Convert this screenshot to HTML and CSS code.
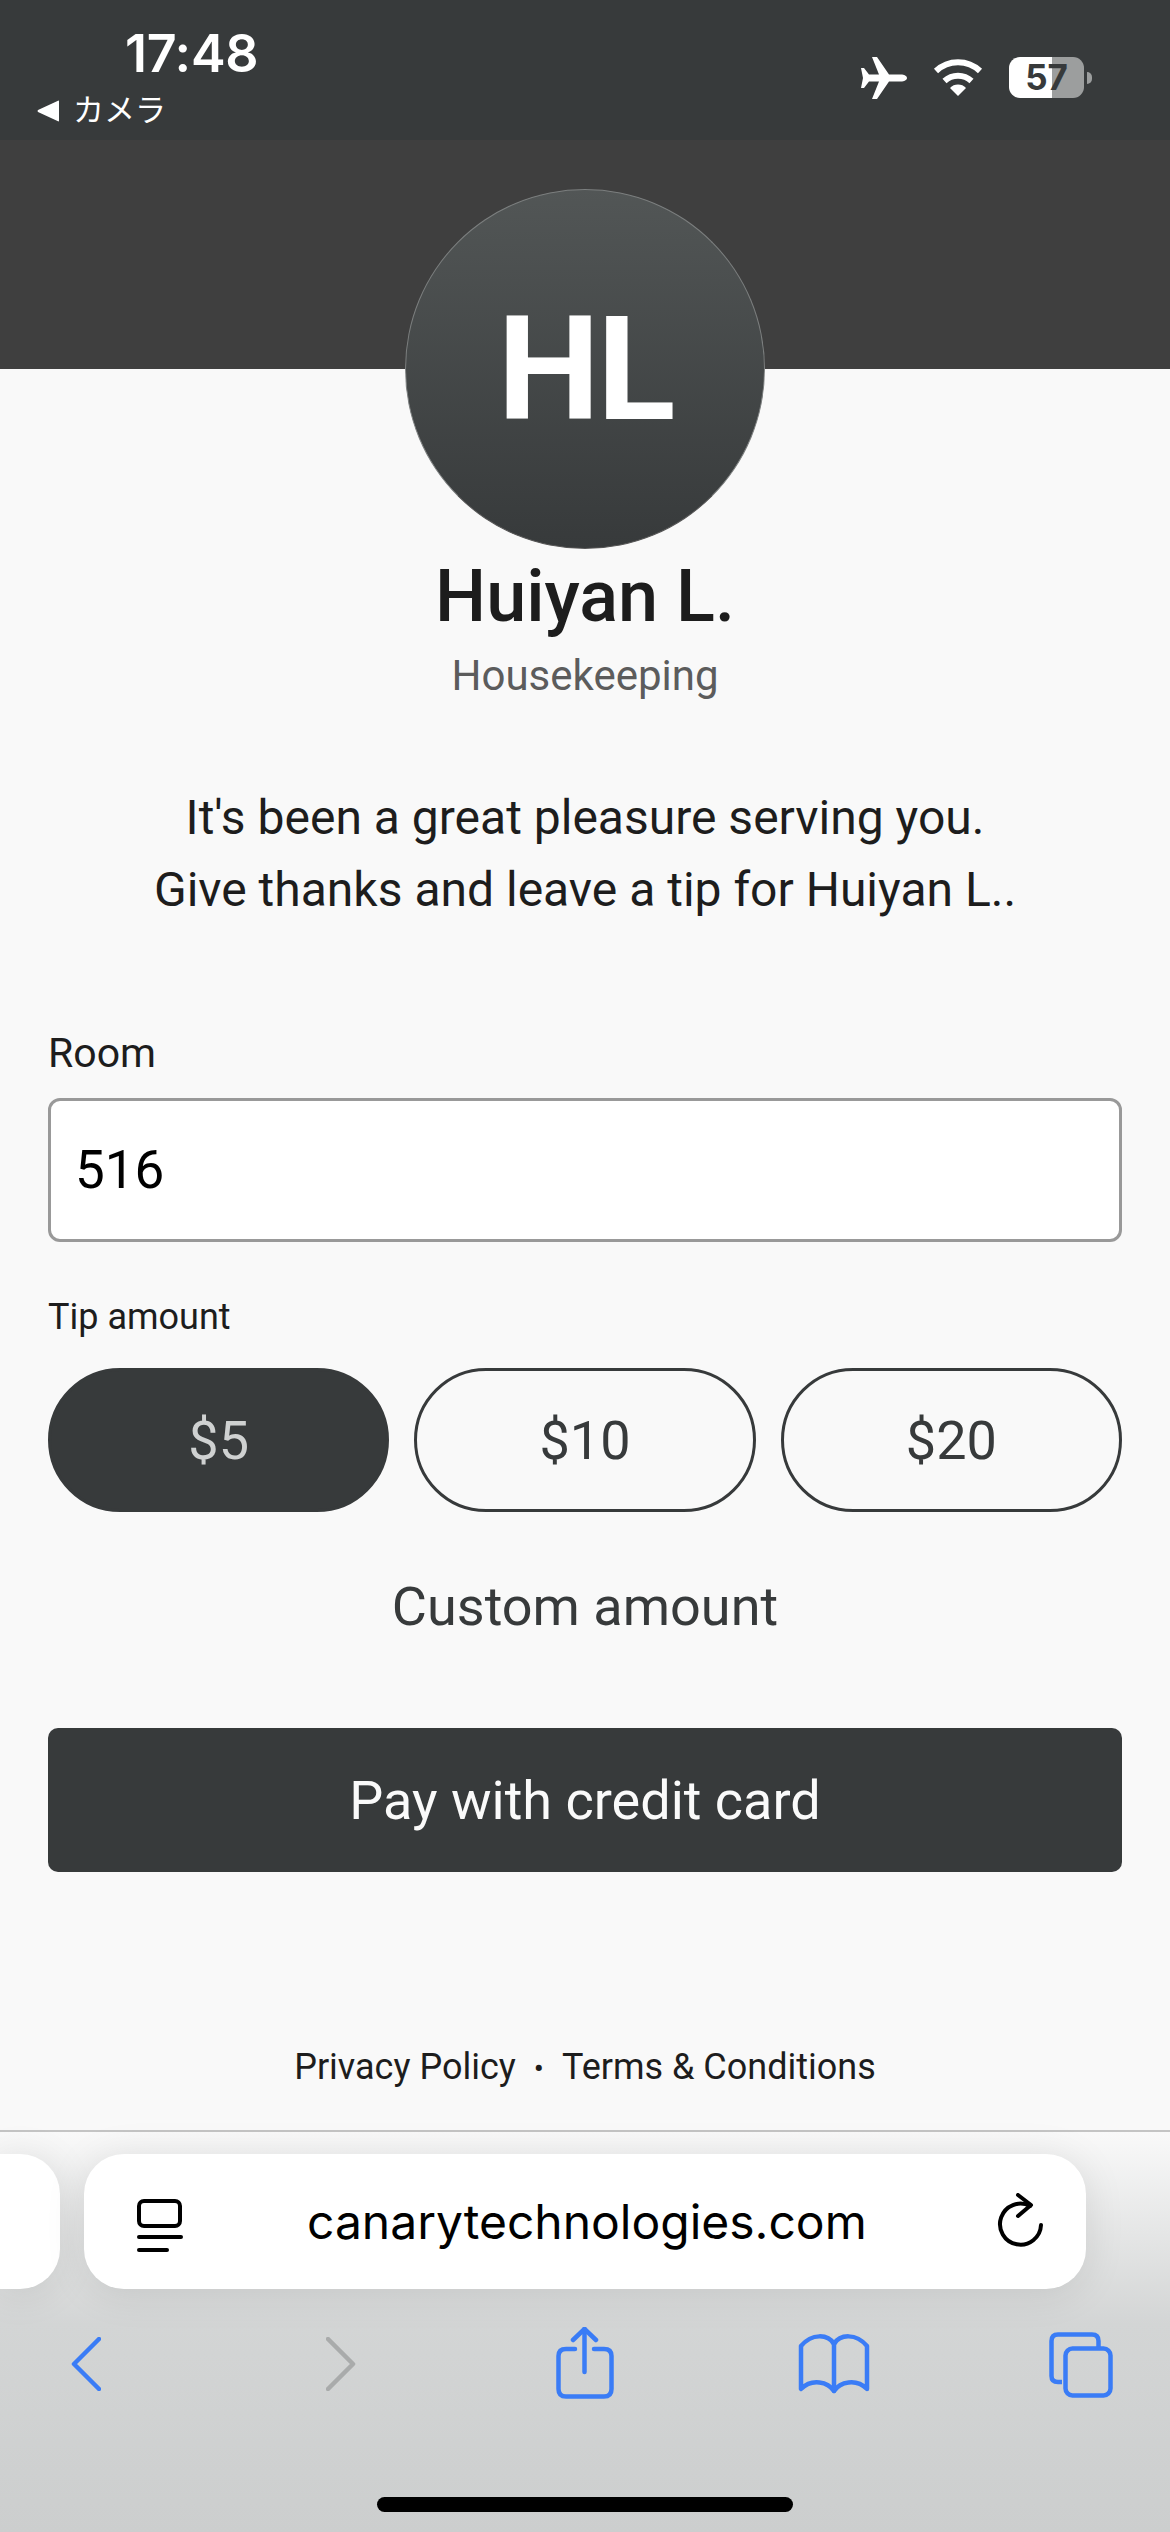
FILE: index.html
```html
<!DOCTYPE html>
<html>
<head>
    <meta charset="utf-8" />
    <title>Huiyan L.</title>
    <link rel="stylesheet" href="styles.css">
</head>
<body>
    <div class="screen">
        <div class="status">
            <div class="statusLeft">
                <div class="time">17:48</div>
                <div class="backApp">
                    <svg class="backTri" width="23" height="22" viewBox="0 0 23 22"><path d="M22 1.5 V20.5 Q22 22 20.5 21 L1 12 Q0 11 1 10 L20.5 1 Q22 0 22 1.5 Z" fill="#fff"/></svg>
                    <span>カメラ</span>
                </div>
            </div>
            <div class="statusRight">
                <svg width="46" height="42" viewBox="0 0 46 42"><path d="M46 21 C46 19 43 17.5 40 17.5 L28 17.5 L16 0 L11 0 L18 17.5 L8 17.5 L3 11 L0 11 L2 21 L0 31 L3 31 L8 24.5 L18 24.5 L11 42 L16 42 L28 24.5 L40 24.5 C43 24.5 46 23 46 21 Z" fill="#fff"/></svg>
                <svg class="wifi" width="50" height="37" viewBox="0 0 50 37" fill="none" stroke="#fff" stroke-width="6">
                    <path d="M3 12 A32 32 0 0 1 47 12"/>
                    <path d="M11.5 22 A20 20 0 0 1 38.5 22"/>
                    <path d="M25 37 L17 29 A11 11 0 0 1 33 29 Z" fill="#fff" stroke="none"/>
                </svg>
                <div class="battery">57</div>
                <div class="batteryNub"></div>
            </div>
        </div>
        <div class="band"></div>

        <div class="avatar">HL</div>
        <div class="name">Huiyan L.</div>
        <div class="role">Housekeeping</div>
        <p class="thanks">It's been a great pleasure serving you.<br />Give thanks and leave a tip for Huiyan L..</p>

        <div class="form">
            <label class="roomLabel" for="room">Room</label>
            <input class="roomInput" id="room" type="text" value="516" />
            <div class="tipLabel">Tip amount</div>
            <div class="tips">
                <button class="tip tipOn">$5</button>
                <button class="tip">$10</button>
                <button class="tip">$20</button>
            </div>
            <div class="custom">Custom amount</div>
            <button class="pay">Pay with credit card</button>
        </div>

        <div class="legal">Privacy Policy<span class="dot">•</span>Terms &amp; Conditions</div>

        <div class="toolbar">
            <div class="pills">
                <div class="pillPrev"></div>
                <div class="pillUrl">
                    <svg class="tabIcon" width="46" height="54" viewBox="0 0 46 54" fill="none" stroke="#000" stroke-width="4" stroke-linecap="round">
                        <rect x="2" y="2" width="41" height="25" rx="5"/>
                        <path d="M2 38 H44"/>
                        <path d="M2 51 H30"/>
                    </svg>
                    <span class="url">canarytechnologies.com</span>
                    <svg class="reload" width="46" height="56" viewBox="0 0 46 56" fill="none" stroke="#000" stroke-width="4" stroke-linecap="round" stroke-linejoin="round">
                        <path d="M44 32 A20.500 20.500 0 1 1 33 13 "/>
                        <path d="M21 2 L34 12 L21 23"/>
                    </svg>
                </div>
            </div>
            <div class="navIcons">
                <svg class="navBack" width="30" height="54" viewBox="0 0 30 54" fill="none" stroke="#3a7cf6" stroke-width="4.500" stroke-linecap="round" stroke-linejoin="round"><path d="M28 2 L3 27 L28 52"/></svg>
                <svg class="navNext" width="30" height="54" viewBox="0 0 30 54" fill="none" stroke="#a9abab" stroke-width="4.500" stroke-linecap="round" stroke-linejoin="round"><path d="M2 2 L27 27 L2 52"/></svg>
                <svg class="navShare" width="58" height="72" viewBox="0 0 58 72" fill="none" stroke="#3a7cf6" stroke-width="4.500" stroke-linecap="round" stroke-linejoin="round">
                    <path d="M19 22 H10 Q2.500 22 2.500 29 V62 Q2.500 69.500 10 69.500 H48 Q55.500 69.500 55.500 62 V29 Q55.500 22 48 22 H38"/>
                    <path d="M28.500 45 V2"/>
                    <path d="M17 13 L28.500 2 L40 13"/>
                </svg>
                <svg class="navBook" width="72" height="60" viewBox="0 0 72 60" fill="none" stroke="#3a7cf6" stroke-width="4.500" stroke-linecap="round" stroke-linejoin="round">
                    <path d="M36 57 C30 48 14 44 3 55 V12 C14 -1 30 0 36 10 C42 0 58 -1 69 12 V55 C58 44 42 48 36 57 Z"/>
                    <path d="M36 10 V57"/>
                </svg>
                <svg class="navTabs" width="64" height="66" viewBox="0 0 64 66" fill="none" stroke="#3a7cf6" stroke-width="4.500" stroke-linejoin="round">
                    <path d="M13 50 H9 Q2.500 50 2.500 44 V9 Q2.500 2.500 9 2.500 H43 Q49.500 2.500 49.500 9 V15"/>
                    <rect x="16.500" y="16.500" width="45" height="47" rx="7"/>
                </svg>
            </div>
            <div class="homeBar"></div>
        </div>
    </div>
</body>
</html>
```

FILE: styles.css
```css
* {
    box-sizing: border-box;
}

body {
    margin: 0;
    background-color: #f9f9f9;
    font-family: Roboto, "Noto Sans CJK JP", sans-serif;
}

.screen {
    width: 1170px;
    height: 2532px;
    display: flex;
    flex-direction: column;
    align-items: center;
    overflow: hidden;
}

/* status bar */
.status {
    width: 100%;
    height: 140px;
    flex: none;
    display: flex;
    justify-content: space-between;
    background-color: #373a3b;
    color: #fff;
}

.statusLeft {
    padding: 25px 0 0 37px;
}

.time {
    margin-left: 88px;
    font-family: Inter, sans-serif;
    font-size: 52px;
    font-weight: 600;
    line-height: 58px;
    letter-spacing: -0.3px;
}

.backApp {
    display: flex;
    align-items: center;
    gap: 13px;
    margin-top: 10px;
    font-size: 31px;
    line-height: 36px;
}

.statusRight {
    display: flex;
    align-items: flex-start;
    gap: 26px;
    padding: 57px 78px 0 0;
}

.wifi {
    margin-top: 2px;
}

.battery {
    width: 75px;
    height: 41px;
    border-radius: 11px;
    background: linear-gradient(to right, #fff 57%, #9c9e9e 57%);
    color: #373a3b;
    font-family: Inter, sans-serif;
    font-size: 35px;
    font-weight: 700;
    line-height: 41px;
    text-align: center;
}

.batteryNub {
    width: 5px;
    height: 12px;
    margin: 15px 0 0 -23px;
    border-radius: 0 6px 6px 0;
    background-color: #9c9e9e;
}

.band {
    width: 100%;
    height: 229px;
    flex: none;
    background-color: #3f3f3f;
}

/* profile */
.avatar {
    width: 360px;
    height: 360px;
    flex: none;
    margin-top: -180px;
    border: 1px solid #7c7f7f;
    border-bottom-color: #555;
    border-radius: 50%;
    background: linear-gradient(to bottom, #525656, #373a3b);
    color: #fff;
    font-size: 145px;
    font-weight: 700;
    line-height: 358px;
    letter-spacing: -3px;
    text-align: center;
}

.name {
    margin-top: 8px;
    color: #1d1d1d;
    font-size: 72px;
    font-weight: 500;
    line-height: 80px;
}

.role {
    margin-top: 14px;
    color: #5c5c5c;
    font-size: 42px;
    line-height: 50px;
}

.thanks {
    margin: 81px 0 0;
    color: #1d1d1d;
    font-size: 48px;
    line-height: 72px;
    text-align: center;
}

/* form */
.form {
    width: 100%;
    padding: 0 48px;
    margin-top: 102px;
}

.roomLabel {
    display: block;
    color: #1d1d1d;
    font-size: 41px;
    line-height: 50px;
}

.roomInput {
    display: block;
    width: 100%;
    height: 144px;
    margin-top: 20px;
    padding: 0 24px;
    border: 3px solid #999;
    border-radius: 12px;
    background-color: #fff;
    color: #000;
    font-family: Roboto, sans-serif;
    font-size: 53px;
    outline: none;
}

.tipLabel {
    margin-top: 53px;
    color: #1d1d1d;
    font-size: 36px;
    line-height: 44px;
}

.tips {
    display: flex;
    gap: 25px;
    margin-top: 29px;
}

.tip {
    flex: 1;
    height: 144px;
    border: 3px solid #373a3b;
    border-radius: 72px;
    background-color: transparent;
    color: #373a3b;
    font-family: Roboto, sans-serif;
    font-size: 54px;
}

.tipOn {
    background-color: #373a3b;
    color: #cfd1d1;
}

.custom {
    margin-top: 60px;
    color: #373a3b;
    font-size: 54px;
    line-height: 70px;
    text-align: center;
}

.pay {
    display: block;
    width: 100%;
    height: 144px;
    margin-top: 86px;
    border: none;
    border-radius: 10px;
    background-color: #373a3b;
    color: #fafafa;
    font-family: Roboto, sans-serif;
    font-size: 54px;
}

.legal {
    margin-top: 173px;
    color: #1d1d1d;
    font-size: 36px;
    line-height: 44px;
}

.dot {
    margin: 0 18px;
    font-size: 30px;
}

/* safari toolbar */
.toolbar {
    width: 100%;
    margin-top: auto;
    height: 402px;
    flex: none;
    padding-top: 22px;
    border-top: 2px solid #c4c4c4;
    background: linear-gradient(to bottom, #f9f9f9, #d3d5d5 48%, #cccece);
}

.pills {
    display: flex;
    gap: 24px;
}

.pillPrev {
    width: 60px;
    height: 135px;
    border-radius: 0 40px 40px 0;
    background-color: #fff;
    box-shadow: 0 4px 40px rgba(0, 0, 0, 0.1);
}

.pillUrl {
    width: 1002px;
    height: 135px;
    display: flex;
    align-items: center;
    border-radius: 40px;
    background-color: #fff;
    box-shadow: 0 4px 40px rgba(0, 0, 0, 0.1);
}

.tabIcon {
    margin: 8px 0 0 53px;
    flex: none;
}

.url {
    margin-left: 124px;
    color: #000;
    font-family: Inter, sans-serif;
    font-size: 48px;
    white-space: nowrap;
}

.reload {
    margin: -2px 43px 0 auto;
    flex: none;
}

.navIcons {
    display: flex;
    align-items: flex-start;
    height: 80px;
    margin-top: 36px;
    padding-left: 71px;
}

.navBack {
    margin-top: 12px;
}

.navNext {
    margin: 12px 0 0 225px;
}

.navShare {
    margin: 2px 0 0 200px;
}

.navBook {
    margin: 9px 0 0 184px;
}

.navTabs {
    margin: 7px 0 0 179px;
}

.homeBar {
    width: 416px;
    height: 15px;
    margin: 92px auto 0;
    border-radius: 8px;
    background-color: #000;
}
```
